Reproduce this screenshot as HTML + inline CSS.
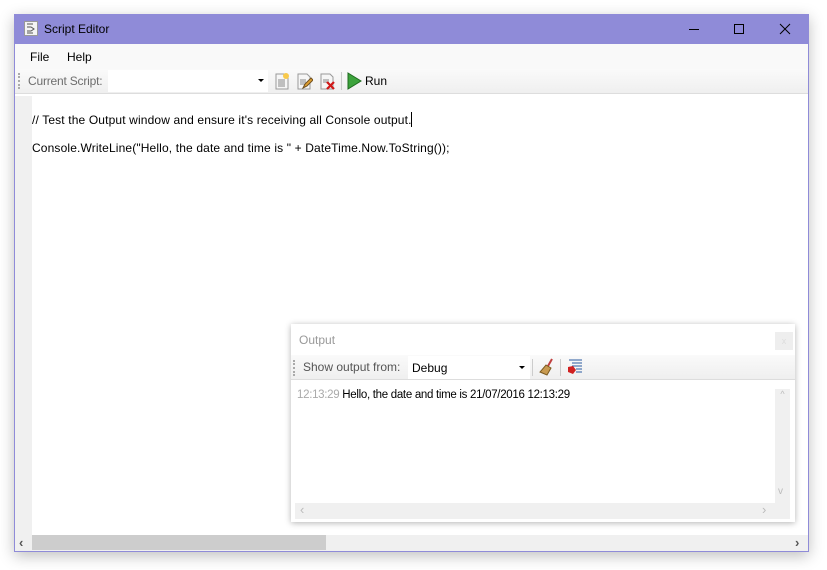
<!DOCTYPE html>
<html><head><style>
*{margin:0;padding:0;box-sizing:border-box}
body{width:827px;height:570px;background:#fff;position:relative;overflow:hidden;font-family:"Liberation Sans",sans-serif;font-size:12px;color:#000}
.a{position:absolute}
</style></head><body>
<div class="a" style="left:14px;top:14px;width:795px;height:538px;border:1px solid #8f8bd8;box-shadow:0 4px 14px rgba(0,0,0,.25);background:#fff"></div>
<!-- title -->
<div class="a" style="left:14px;top:14px;width:795px;height:30px;background:#8f8bd8"></div>
<svg class="a" style="left:24px;top:21px" width="15" height="15"><rect x="0.5" y="0.5" width="13" height="14" fill="#f4f4f4" stroke="#999"/><path d="M3 3h6M3 6h4l3 2-3 2H3M3 12h6" stroke="#555" fill="none"/></svg>
<div class="a" style="left:44px;top:22px;font-size:12px;color:#000">Script Editor</div>
<div class="a" style="left:689px;top:29px;width:10px;height:1px;background:#000"></div>
<div class="a" style="left:734px;top:24px;width:10px;height:10px;border:1px solid #000"></div>
<svg class="a" style="left:779px;top:23px" width="12" height="12"><path d="M1 1L11 11M11 1L1 11" stroke="#000"/></svg>
<!-- menu -->
<div class="a" style="left:15px;top:44px;width:793px;height:25px;background:#f9f9f9"></div>
<div class="a" style="left:30px;top:50px">File</div>
<div class="a" style="left:67px;top:50px">Help</div>
<!-- toolbar -->
<div class="a" style="left:15px;top:69px;width:793px;height:25px;background:linear-gradient(#fafafa,#efefef);border-bottom:1px solid #ddd"></div>
<div class="a" style="left:18px;top:73px;width:2px;height:16px;border-left:2px dotted #aaa"></div>
<div class="a" style="left:28px;top:74px;color:#6d6d6d;letter-spacing:-.2px">Current Script:</div>
<div class="a" style="left:108px;top:70px;width:160px;height:22px;background:#fff"></div>
<div class="a" style="left:258px;top:79px;border:3px solid transparent;border-top:3px solid #000;border-bottom:0"></div>
<svg class="a" style="left:273px;top:72px" width="18" height="18"><path d="M3 2h9l3 3v12H3z" fill="#f6f6f6" stroke="#999"/><path d="M5 8h7M5 10h7M5 12h7M5 14h7" stroke="#888"/><circle cx="13" cy="4" r="3" fill="#f8c94a"/></svg>
<svg class="a" style="left:295px;top:72px" width="18" height="18"><path d="M3 2h9l3 3v12H3z" fill="#f6f6f6" stroke="#999"/><path d="M5 8h6M5 10h6M5 12h5" stroke="#888"/><path d="M8 16l2-4 6-6 2 2-6 6z" fill="#e0a030" stroke="#705020"/></svg>
<svg class="a" style="left:318px;top:72px" width="18" height="18"><path d="M3 2h9l3 3v12H3z" fill="#f6f6f6" stroke="#999"/><path d="M5 8h6M5 10h6" stroke="#888"/><path d="M9 10l7 7M16 10l-7 7" stroke="#d01818" stroke-width="2.2"/></svg>
<div class="a" style="left:341px;top:72px;width:1px;height:18px;background:#ccc"></div>
<svg class="a" style="left:346px;top:72px" width="16" height="18"><path d="M2 1L15 9 2 17z" fill="#3ca33c" stroke="#1f6b1f"/></svg>
<div class="a" style="left:365px;top:74px">Run</div>
<!-- editor -->
<div class="a" style="left:15px;top:96px;width:17px;height:439px;background:#f0f0f0"></div>
<div class="a" style="left:32px;top:113px;font-size:12px;letter-spacing:.14px">// Test the Output window and ensure it's receiving all Console output.</div>
<div class="a" style="left:411px;top:112px;width:1px;height:15px;background:#000"></div>
<div class="a" style="left:32px;top:141px;font-size:12px;letter-spacing:.14px">Console.WriteLine("Hello, the date and time is " + DateTime.Now.ToString());</div>
<!-- hscroll -->
<div class="a" style="left:15px;top:535px;width:793px;height:16px;background:#f0f0f0"></div>
<div class="a" style="left:32px;top:535px;width:294px;height:15px;background:#cdcdcd"></div>
<div class="a" style="left:19px;top:535px;color:#555;font-size:13px;font-weight:bold">‹</div>
<div class="a" style="left:795px;top:535px;color:#555;font-size:13px;font-weight:bold">›</div>
<!-- output panel -->
<div class="a" style="left:291px;top:324px;width:504px;height:198px;background:#fff;box-shadow:0 1px 6px rgba(0,0,0,.3)"></div>
<div class="a" style="left:299px;top:333px;color:#999;font-size:12px">Output</div>
<div class="a" style="left:775px;top:332px;width:18px;height:18px;background:#eee;color:#ddd;font-size:9px;text-align:center;line-height:18px">x</div>
<div class="a" style="left:291px;top:355px;width:504px;height:25px;background:linear-gradient(#fafafa,#efefef);border-bottom:1px solid #ddd"></div>
<div class="a" style="left:293px;top:360px;width:2px;height:16px;border-left:2px dotted #aaa"></div>
<div class="a" style="left:303px;top:360px;color:#555">Show output from:</div>
<div class="a" style="left:408px;top:356px;width:122px;height:23px;background:#fff"></div>
<div class="a" style="left:412px;top:361px">Debug</div>
<div class="a" style="left:519px;top:366px;border:3px solid transparent;border-top:3px solid #000;border-bottom:0"></div>
<div class="a" style="left:532px;top:359px;width:1px;height:17px;background:#ccc"></div>
<svg class="a" style="left:538px;top:358px" width="18" height="18"><path d="M14 1l-4 7" stroke="#c04040" stroke-width="2"/><path d="M8 7l5 3-4 7-7-3z" fill="#c89a50" stroke="#7a5a20"/></svg>
<div class="a" style="left:560px;top:359px;width:1px;height:17px;background:#ccc"></div>
<svg class="a" style="left:566px;top:358px" width="18" height="18"><path d="M3 2h13M6 5h10M6 8h10M10 11h6M10 14h6" stroke="#2a5aa0"/><path d="M2 9l5-1 3 4-3 4-5-2z" fill="#d02020"/></svg>
<div class="a" style="left:297px;top:389px;color:#aaa;font-size:11.5px;letter-spacing:-.3px">12:13:29 <span style="color:#000">Hello, the date and time is 21/07/2016 12:13:29</span></div>
<div class="a" style="left:775px;top:389px;width:15px;height:114px;background:#f0f0f0;color:#bbb;font-size:9px;text-align:center">^</div>
<div class="a" style="left:295px;top:503px;width:495px;height:16px;background:#f0f0f0"></div>
<div class="a" style="left:300px;top:502px;color:#bbb;font-size:13px">‹</div>
<div class="a" style="left:762px;top:502px;color:#bbb;font-size:13px">›</div>
<div class="a" style="left:778px;top:486px;color:#bbb;font-size:10px">v</div>
</body></html>
